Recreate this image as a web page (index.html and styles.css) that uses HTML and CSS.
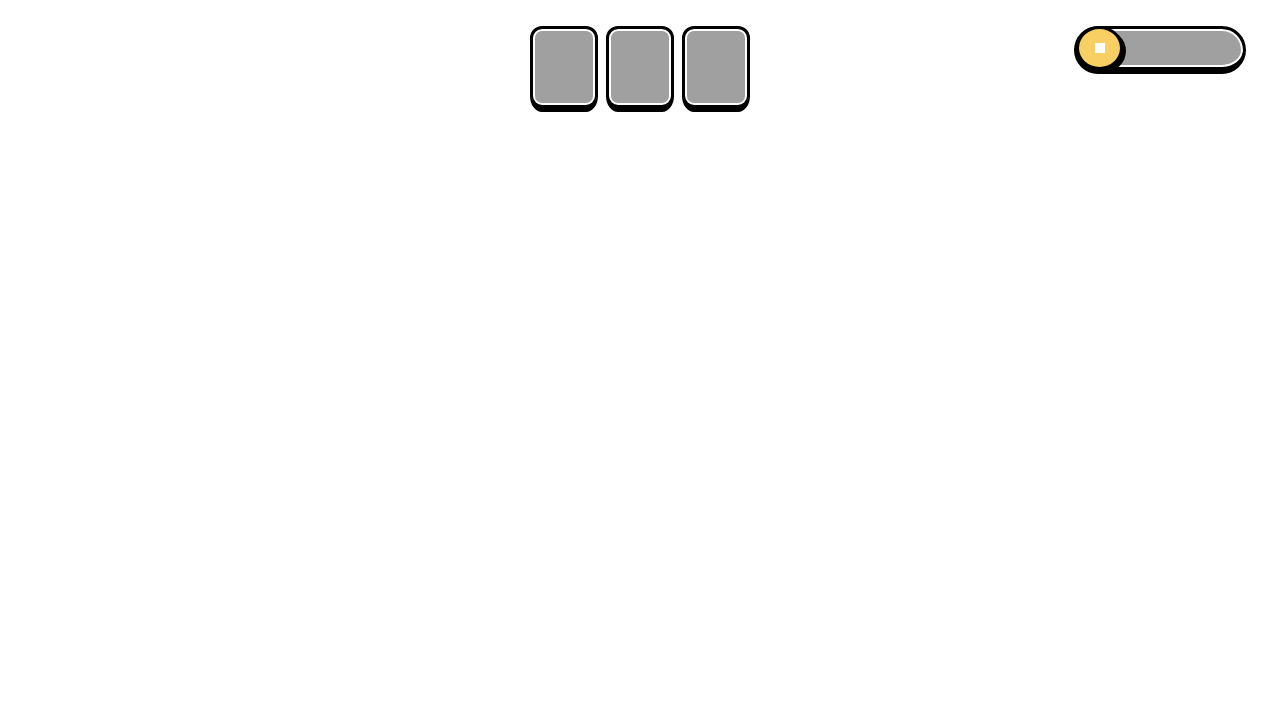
FILE: index.html
```html
<!DOCTYPE html>
<html>
<head>
<meta charset="utf-8">
<link rel="stylesheet" href="styles.css">
</head>
<body>
<header class="bar">
  <div class="spacer"></div>
  <div class="slots">
    <div class="slot"></div>
    <div class="slot"></div>
    <div class="slot"></div>
  </div>
  <div class="right">
    <div class="toggle">
      <div class="knob"><span class="stop"></span></div>
    </div>
  </div>
</header>
</body>
</html>
```
FILE: styles.css
```css
html, body {
  margin: 0;
  padding: 0;
  background: #fff;
  font-family: "Liberation Sans", Arial, sans-serif;
}
.bar {
  display: grid;
  grid-template-columns: 1fr auto 1fr;
  align-items: start;
  padding: 26px 34px 0 34px;
}
.slots {
  display: flex;
  gap: 8px;
}
.slot {
  box-sizing: border-box;
  width: 68px;
  height: 86px;
  border-style: solid;
  border-color: #000;
  border-width: 3px 3px 7px 3px;
  border-radius: 12px 12px 12px 12px / 12px 12px 16px 16px;
  background: #a0a0a0;
  box-shadow: inset 0 0 0 2px #fff;
}
.right {
  display: flex;
  justify-content: flex-end;
}
.toggle {
  position: relative;
  box-sizing: border-box;
  width: 172px;
  height: 48px;
  border-style: solid;
  border-color: #000;
  border-width: 3px 3px 7px 3px;
  border-radius: 24px;
  background: #a0a0a0;
  box-shadow: inset 0 0 0 2px #fff;
}
.knob {
  position: absolute;
  left: -1px;
  top: -3px;
  box-sizing: border-box;
  width: 47px;
  height: 44px;
  border: 3px solid #000;
  border-radius: 50%;
  background: #f8cf63;
  box-shadow: 3px 3px 0 #000;
  display: flex;
  align-items: center;
  justify-content: center;
}
.stop {
  width: 10px;
  height: 10px;
  margin-top: -1px;
  background: #fff;
}
```
